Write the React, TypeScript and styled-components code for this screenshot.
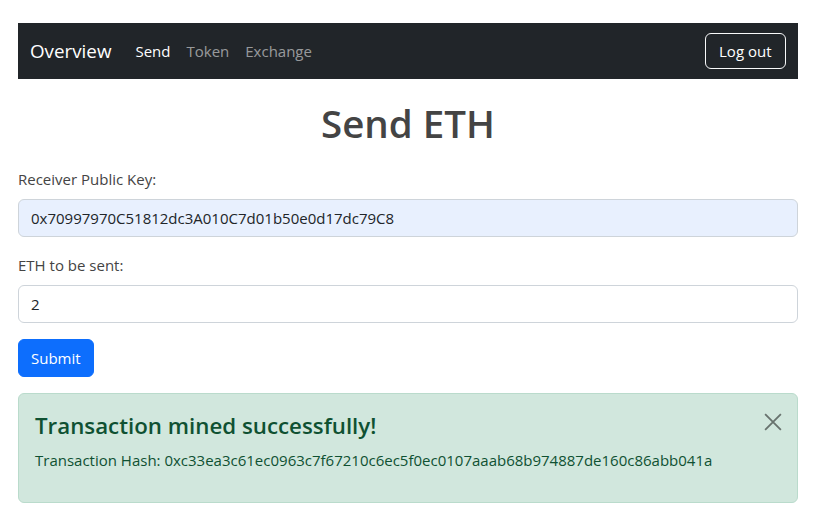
import React from "react";
import styled, { createGlobalStyle } from "styled-components";

const GlobalStyle = createGlobalStyle`
  *, *::before, *::after { box-sizing: border-box; }
  body {
    margin: 0;
    background: #ffffff;
    font-family: "Open Sans", "Noto Sans", sans-serif;
    font-size: 15px;
    line-height: 24px;
    color: #212529;
  }
`;

const Page = styled.div`
  padding: 23px 24px 20px 18px;
`;

const Navbar = styled.nav`
  height: 56px;
  background: #212529;
  display: flex;
  align-items: center;
  padding: 0 12px;
`;

const Brand = styled.a`
  color: #ffffff;
  font-size: 18.8px;
  line-height: 30px;
  margin-right: 16px;
  text-decoration: none;
`;

const NavList = styled.div`
  display: flex;
  align-items: center;
  flex: 1;
`;

const NavLink = styled.a<{ $active?: boolean }>`
  color: ${(p) => (p.$active ? "#ffffff" : "rgba(255,255,255,0.55)")};
  padding: 8px 8px;
  text-decoration: none;
`;

const OutlineButton = styled.button`
  font-family: inherit;
  font-size: 15px;
  line-height: 24px;
  color: #ffffff;
  background: transparent;
  border: 1px solid #f8f9fa;
  border-radius: 6px;
  padding: 5px 13.5px;
`;

const Title = styled.h1`
  margin: 21px 0 21px;
  text-align: center;
  font-size: 38.5px;
  line-height: 46px;
  font-weight: 600;
  color: #444444;
`;

const Field = styled.div`
  margin-bottom: 16px;
`;

const Label = styled.label`
  display: block;
  margin-bottom: 8px;
  color: #444444;
`;

const Input = styled.input<{ $filled?: boolean }>`
  display: block;
  width: 100%;
  height: 38px;
  font-family: inherit;
  font-size: 15px;
  line-height: 24px;
  color: #212529;
  background: ${(p) => (p.$filled ? "#e8f0fe" : "#ffffff")};
  border: 1px solid #ced4da;
  border-radius: 6px;
  padding: 6px 12px;
  outline: none;
`;

const PrimaryButton = styled.button`
  font-family: inherit;
  font-size: 15px;
  line-height: 24px;
  color: #ffffff;
  background: #0d6efd;
  border: 1px solid #0d6efd;
  border-radius: 6px;
  padding: 6px 12px;
  height: 38px;
  margin-bottom: 16px;
`;

const Alert = styled.div`
  position: relative;
  background: #d1e7dd;
  border: 1px solid #badbcc;
  border-radius: 6px;
  color: #0f5132;
  padding: 18px 48px 16px 16px;
`;

const AlertHeading = styled.h4`
  margin: 0 0 8px;
  font-size: 22.3px;
  line-height: 28px;
  font-weight: 600;
  color: #0f5132;
`;

const AlertText = styled.p`
  margin: 0 0 14px;
`;

const CloseButton = styled.button`
  position: absolute;
  top: 16px;
  right: 12px;
  width: 24px;
  height: 24px;
  padding: 0;
  border: 0;
  background: transparent;
  display: flex;
  align-items: center;
  justify-content: center;
  opacity: 0.5;
`;

export default function App() {
  return (
    <>
      <GlobalStyle />
      <Page>
        <Navbar>
          <Brand href="#">Overview</Brand>
          <NavList>
            <NavLink $active href="#">Send</NavLink>
            <NavLink href="#">Token</NavLink>
            <NavLink href="#">Exchange</NavLink>
          </NavList>
          <OutlineButton>Log out</OutlineButton>
        </Navbar>
        <Title>Send ETH</Title>
        <Field>
          <Label>Receiver Public Key:</Label>
          <Input $filled readOnly value="0x70997970C51812dc3A010C7d01b50e0d17dc79C8" />
        </Field>
        <Field>
          <Label>ETH to be sent:</Label>
          <Input readOnly value="2" />
        </Field>
        <PrimaryButton>Submit</PrimaryButton>
        <Alert>
          <AlertHeading>Transaction mined successfully!</AlertHeading>
          <AlertText>
            Transaction Hash: 0xc33ea3c61ec0963c7f67210c6ec5f0ec0107aaab68b974887de160c86abb041a
          </AlertText>
          <CloseButton aria-label="Close">
            <svg width="18" height="18" viewBox="0 0 16 16">
              <path d="M1 1 L15 15 M15 1 L1 15" stroke="#000" strokeWidth="1.6" />
            </svg>
          </CloseButton>
        </Alert>
      </Page>
    </>
  );
}
